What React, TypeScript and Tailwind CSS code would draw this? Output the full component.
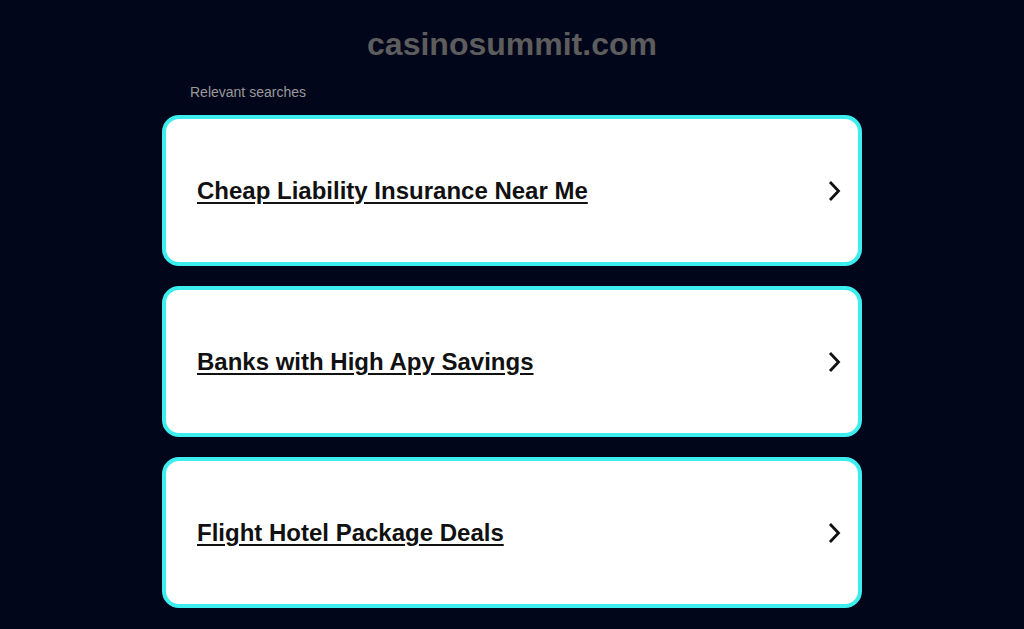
const searches = [
  'Cheap Liability Insurance Near Me',
  'Banks with High Apy Savings',
  'Flight Hotel Package Deals',
];

const Chevron = () => (
  <svg width="16" height="22" viewBox="0 0 16 22" fill="none">
    <path d="M4 2 L12.5 11 L4 20" stroke="#111" strokeWidth="2.8" />
  </svg>
);

export default function App() {
  return (
    <div className="min-h-[629px] bg-[#02061a] font-['Liberation_Sans',Arial,sans-serif]">
      <div className="mx-auto w-[700px] pt-[25px]">
        <h1 className="text-center text-[32px] font-bold leading-[38px] text-[#5d5d5d]">
          casinosummit.com
        </h1>
        <p className="mt-[21px] pl-[28px] text-[14px] leading-[16px] text-[#9a9a9a]">
          Relevant searches
        </p>
        <div className="mt-[15px] flex flex-col gap-[20px]">
          {searches.map((s) => (
            <a
              key={s}
              href="#"
              className="flex h-[151px] items-center justify-between rounded-[17px] border-4 border-[#3ceeee] bg-white pl-[31px] pr-[16px]"
            >
              <span className="text-[24px] font-bold text-[#111] underline decoration-2 underline-offset-[3px]">
                {s}
              </span>
              <Chevron />
            </a>
          ))}
        </div>
      </div>
    </div>
  );
}
